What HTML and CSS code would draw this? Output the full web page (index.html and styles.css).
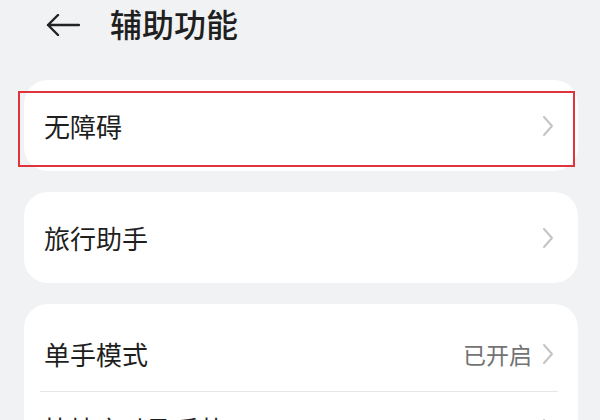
FILE: index.html
```html
<!DOCTYPE html>
<html lang="zh-CN">
<head>
    <meta charset="UTF-8">
    <meta name="viewport" content="width=device-width, initial-scale=1.0">
    <title>辅助功能</title>
    <link rel="stylesheet" href="styles.css">
</head>
<body>
    <div class="header">
        <svg class="back" width="34" height="22" viewBox="0 0 34 22">
            <path d="M33 11 H2 M12 1 L2 11 L12 21" fill="none" stroke="#222" stroke-width="2.4" stroke-linecap="round" stroke-linejoin="round"/>
        </svg>
        <h1>辅助功能</h1>
    </div>
    <div class="list">
        <div class="card single highlighted">
            <div class="row">
                <span class="label">无障碍</span>
                <svg class="chevron" width="12" height="22" viewBox="0 0 12 22"><path d="M2 2 L10 11 L2 20" fill="none" stroke="#c4c4c4" stroke-width="2" stroke-linecap="round" stroke-linejoin="round"/></svg>
            </div>
            <div class="mark"></div>
        </div>
        <div class="card single">
            <div class="row">
                <span class="label">旅行助手</span>
                <svg class="chevron" width="12" height="22" viewBox="0 0 12 22"><path d="M2 2 L10 11 L2 20" fill="none" stroke="#c4c4c4" stroke-width="2" stroke-linecap="round" stroke-linejoin="round"/></svg>
            </div>
        </div>
        <div class="card group">
            <div class="row divided">
                <span class="label">单手模式</span>
                <span class="value">已开启</span>
                <svg class="chevron" width="12" height="22" viewBox="0 0 12 22"><path d="M2 2 L10 11 L2 20" fill="none" stroke="#c4c4c4" stroke-width="2" stroke-linecap="round" stroke-linejoin="round"/></svg>
            </div>
            <div class="row">
                <span class="label">快捷启动及手势</span>
                <svg class="chevron" width="12" height="22" viewBox="0 0 12 22"><path d="M2 2 L10 11 L2 20" fill="none" stroke="#c4c4c4" stroke-width="2" stroke-linecap="round" stroke-linejoin="round"/></svg>
            </div>
        </div>
    </div>
</body>
</html>
```

FILE: styles.css
```css
body {
    margin: 0;
    padding: 0;
    width: 600px;
    height: 420px;
    overflow: hidden;
    background-color: #f1f2f4;
    font-family: "Noto Sans CJK SC", "Noto Sans", sans-serif;
    color: #1f1f1f;
}

.header {
    display: flex;
    align-items: center;
    height: 46px;
    padding-left: 46px;
    margin-bottom: 34px;
}

.back {
    margin-top: 4px;
    margin-right: 30px;
}

.header h1 {
    margin: 0;
    font-size: 32px;
    font-weight: 500;
    line-height: 46px;
}

.list {
    display: flex;
    flex-direction: column;
    gap: 21px;
    margin: 0 22px 0 24px;
}

.card {
    position: relative;
    background: #fff;
    border-radius: 24px;
}

.single .row {
    height: 91px;
}

.group {
    padding-top: 13px;
}

.row {
    display: flex;
    align-items: center;
    height: 74px;
    padding: 0 24px 0 20px;
}

.row.divided {
    border-bottom: 1px solid #e6e6e6;
    margin: 0 20px 0 16px;
    padding: 0 4px 0 4px;
}

.label {
    flex: 1;
    font-size: 26px;
    line-height: 1;
}

.value {
    font-size: 23px;
    color: #737373;
    margin-right: 10px;
}

.mark {
    position: absolute;
    left: -6px;
    right: 3px;
    top: 11px;
    bottom: 4px;
    border: 2px solid #e0343d;
}
```
